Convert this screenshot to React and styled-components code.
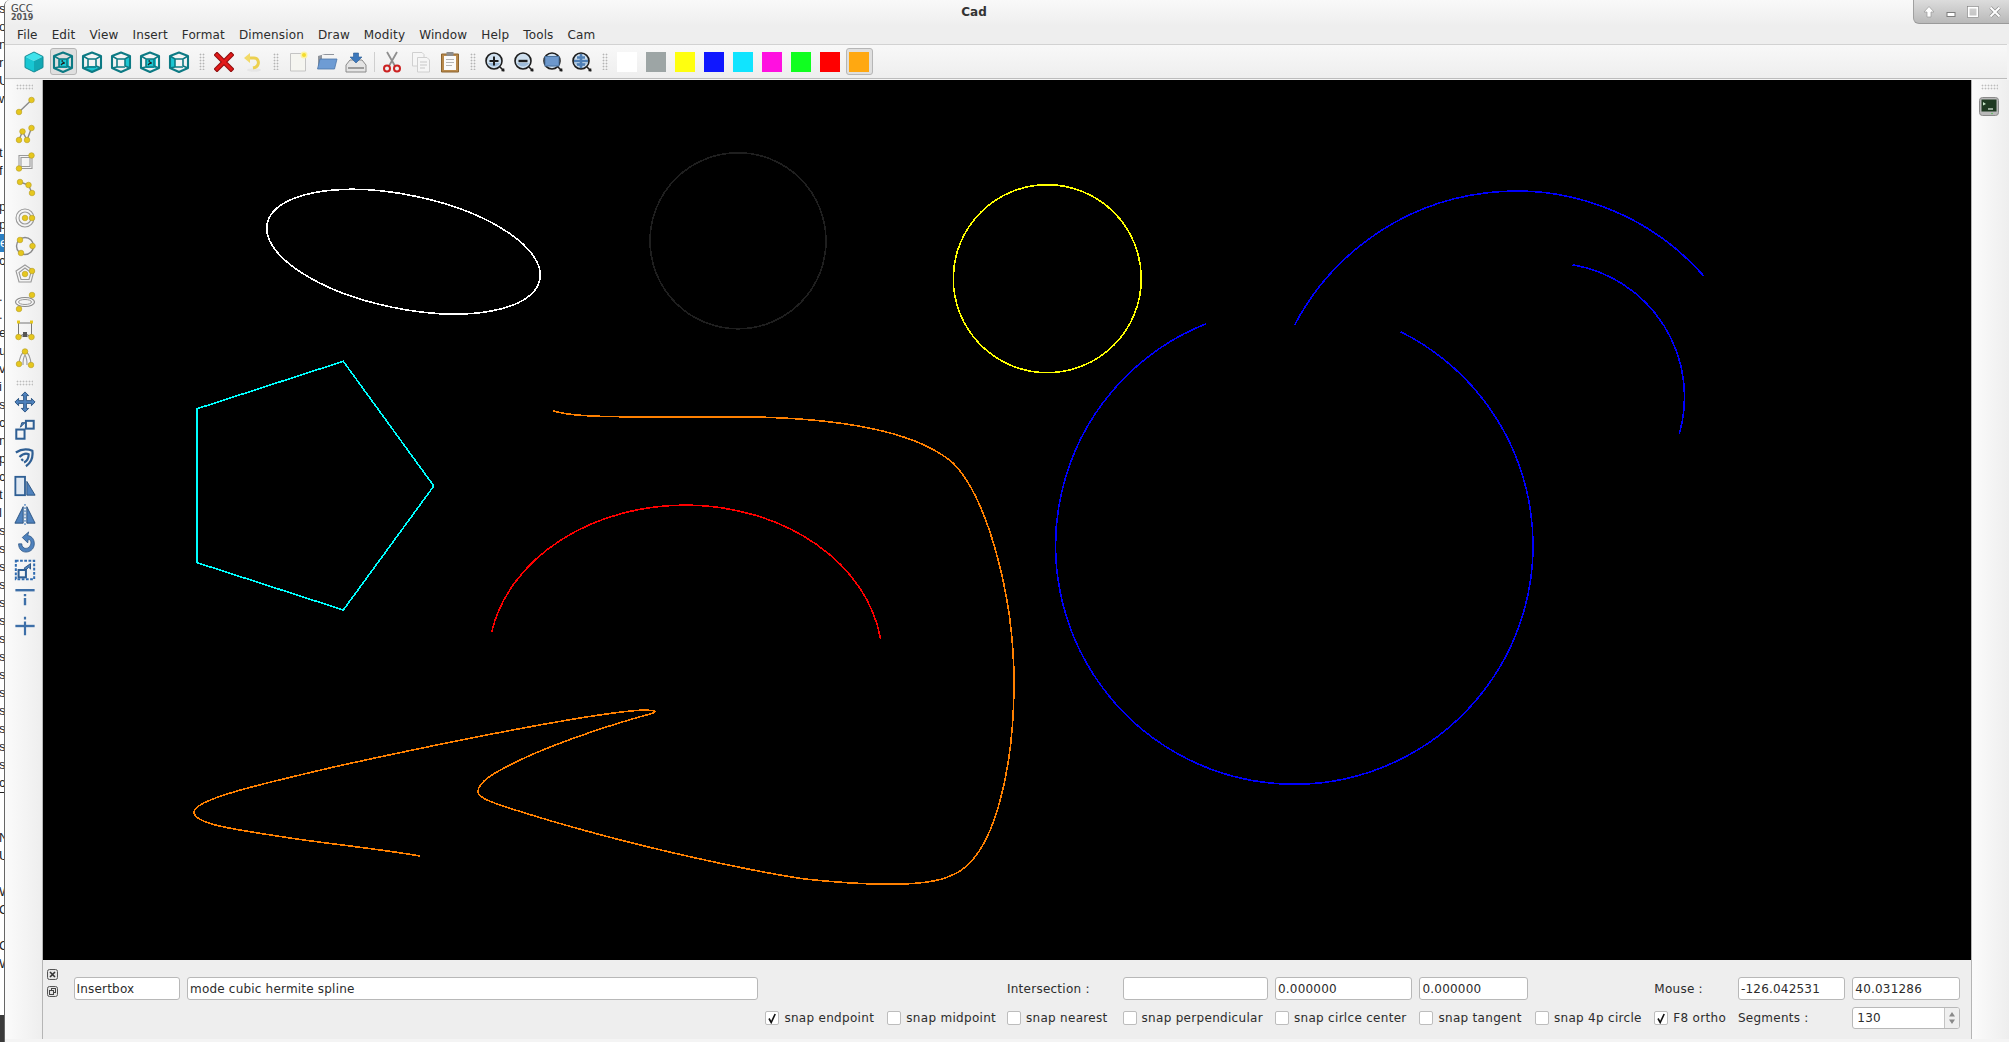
import React from "react";
import styled, { createGlobalStyle } from "styled-components";

const GlobalStyle = createGlobalStyle`
  html, body, #root {
    margin: 0;
    height: 100%;
    overflow: hidden;
  }
  body {
    background: #fff;
    font-family: "DejaVu Sans", sans-serif;
    font-size: 12px;
    color: #2c2c2c;
  }
`;

const Desktop = styled.div`
  display: flex;
  width: 2009px;
  height: 1042px;
  overflow: hidden;
`;

const BackStrip = styled.div`
  flex: 0 0 4px;
  display: flex;
  flex-direction: column;
  overflow: hidden;
  background: #fff;
`;

const BackRow = styled.div`
  flex: 0 0 18px;
  height: 18px;
  width: 12px;
  margin-left: ${(p) => (p.$hl ? 0 : -1)}px;
  line-height: 18px;
  font-family: "Liberation Sans", sans-serif;
  font-size: 13px;
  color: ${(p) => (p.$hl ? "#fff" : "#222")};
  background: ${(p) => (p.$hl ? "#2a7fc4" : "transparent")};
  border-bottom: ${(p) => (p.$ruled ? "1px solid #222" : "none")};
`;

const BackDark = styled.div`
  margin-top: auto;
  flex: 0 0 27px;
  background: #3a3a3a;
`;

const Window = styled.div`
  flex: 1;
  min-width: 0;
  display: flex;
  flex-direction: column;
  background: #f4f4f4;
  border-left: 1px solid #666;
  border-top-left-radius: 6px;
  overflow: hidden;
  padding-bottom: 3px;
`;

const TitleBar = styled.div`
  flex: 0 0 26px;
  display: flex;
  align-items: flex-start;
  background: linear-gradient(to bottom, #f9f9f9, #eeeeee);
`;

const Logo = styled.div`
  width: 24px;
  margin: 4px 0 0 6px;
  color: #444;
  font-size: 10px;
  line-height: 10px;
`;

const LogoYear = styled.div`
  font-size: 8px;
  line-height: 8px;
  font-weight: bold;
  color: #555;
`;

const Title = styled.div`
  flex: 1;
  text-align: center;
  font-weight: bold;
  font-size: 12px;
  line-height: 12px;
  padding-top: 6px;
  color: #333;
`;

const WinButtons = styled.div`
  display: flex;
  align-items: center;
  height: 23px;
  padding: 0 3px 0 4px;
  background: linear-gradient(to bottom, #dcdcdc, #b9b9b9);
  border-left: 1px solid #a0a0a0;
  border-bottom: 1px solid #9a9a9a;
  border-bottom-left-radius: 6px;
`;

const WinButton = styled.div`
  width: 22px;
  height: 22px;
  display: flex;
  align-items: center;
  justify-content: center;
`;

const MenuBar = styled.div`
  flex: 0 0 18px;
  display: flex;
  align-items: center;
  padding-left: 5px;
  background: #eeeeee;
`;

const MenuItem = styled.div`
  padding: 0 7px;
  line-height: 18px;
  font-size: 12px;
  letter-spacing: 0.14px;
  color: #2c2c2c;
`;

const Toolbar = styled.div`
  flex: 0 0 35px;
  display: flex;
  align-items: center;
  box-sizing: border-box;
  margin: 0 2px 1px 0;
  padding-left: 14.5px;
  background: linear-gradient(to bottom, #f8f8f8, #eeeeee);
  border-top: 1px solid #d2d2d2;
  border-bottom: 1px solid #bcbcbc;
`;

const ToolButton = styled.div`
  flex: 0 0 27px;
  height: 27px;
  margin: 0 1px;
  box-sizing: border-box;
  display: flex;
  align-items: center;
  justify-content: center;
  border: 1px solid ${(p) => (p.$active ? "#b6b6b6" : "transparent")};
  border-radius: 3px;
  background: ${(p) => (p.$active ? "#dfdfdf" : "transparent")};
`;

const Swatch = styled.div`
  width: 20px;
  height: 20px;
  background: ${(p) => p.$color};
`;

const GripBox = styled.div`
  flex: 0 0 16px;
  display: flex;
  justify-content: center;
`;

const DotsV = styled.div`
  width: 6px;
  height: 17px;
  background: radial-gradient(circle, #b4b4b4 0.8px, transparent 1.1px) 0 0 / 3px 3px;
`;

const ToolSep = styled.div`
  flex: 0 0 1px;
  height: 20px;
  margin: 0 3px;
  background: #cfcfcf;
`;

const Body = styled.div`
  flex: 1;
  min-height: 0;
  display: flex;
`;

const SideBar = styled.div`
  flex: 0 0 38px;
  box-sizing: border-box;
  display: flex;
  flex-direction: column;
  background: linear-gradient(to right, #fbfbfb, #eeeeee);
  border-${(p) => p.$side}: 1px solid #b5b5b5;
  padding-${(p) => (p.$side === "right" ? "left" : "right")}: ${(p) => (p.$side === "right" ? 2 : 3)}px;
`;

const DotsH = styled.div`
  flex: 0 0 6px;
  width: 17px;
  margin: ${(p) => p.$top}px auto 2px;
  background: radial-gradient(circle, #bcbcbc 0.8px, transparent 1.1px) 0 0 / 3px 3px;
`;

const SideButton = styled.div`
  flex: 0 0 28px;
  display: flex;
  align-items: center;
  justify-content: center;
`;

const Center = styled.div`
  flex: 1;
  min-width: 0;
  display: flex;
  flex-direction: column;
`;

const Canvas = styled.div`
  flex: 1;
  min-height: 0;
  background: #000;
  svg {
    display: block;
    width: 100%;
    height: 100%;
  }
`;

const Panel = styled.div`
  flex: 0 0 79px;
  display: flex;
  background: #eeeeee;
`;

const DockTools = styled.div`
  flex: 0 0 30.5px;
  box-sizing: border-box;
  display: flex;
  flex-direction: column;
  gap: 6px;
  padding: 9px 0 0 4px;
`;

const DockButton = styled.div`
  width: 11px;
  height: 11px;
`;

const FormGrid = styled.div`
  display: grid;
  grid-template-columns: 106.5px 571.4px 114.9px 112.7px 108.6px 145.4px 137.5px 108.5px 112.4px 76.6px 107.4px 107.2px;
  grid-template-rows: 23px 22px;
  column-gap: 7px;
  row-gap: 7px;
  margin-top: 17px;
  align-self: flex-start;
`;

const Field = styled.input`
  grid-column: ${(p) => p.$col};
  grid-row: 1;
  min-width: 0;
  box-sizing: border-box;
  height: 23px;
  margin: 0;
  padding: 0 2px;
  background: #fff;
  border: 1px solid #b8b8b8;
  border-radius: 3px;
  outline: none;
  font-family: inherit;
  font-size: 12px;
  letter-spacing: 0.2px;
  color: #2c2c2c;
`;

const Label = styled.div`
  grid-column: ${(p) => p.$col};
  grid-row: ${(p) => p.$row};
  align-self: center;
  font-size: 12px;
  letter-spacing: 0.25px;
  white-space: nowrap;
`;

const CheckItem = styled.div`
  grid-column: ${(p) => p.$col};
  grid-row: 2;
  display: flex;
  align-items: center;
  gap: 5px;
  font-size: 12px;
  letter-spacing: 0.3px;
  white-space: nowrap;
`;

const CheckBox = styled.div`
  flex: 0 0 14px;
  height: 14px;
  box-sizing: border-box;
  display: flex;
  align-items: center;
  justify-content: center;
  background: #fff;
  border: 1px solid #bdbdbd;
  border-radius: 2px;
`;

const SpinBox = styled.div`
  grid-column: 12;
  grid-row: 2;
  display: flex;
  box-sizing: border-box;
  background: #fff;
  border: 1px solid #b8b8b8;
  border-radius: 3px;
  overflow: hidden;
`;

const SpinValue = styled.div`
  flex: 1;
  padding-left: 4px;
  line-height: 20px;
  letter-spacing: 0.25px;
`;

const SpinArrows = styled.div`
  flex: 0 0 14px;
  display: flex;
  align-items: center;
  justify-content: center;
  background: #efefef;
  border-left: 1px solid #c4c4c4;
`;

// hermite curve as drawn on the canvas, page coordinates
const hermite =
  "M553 410.7 C565 415 590 416.5 619 416.7 C670 417 720 416.5 756 417 " +
  "C840 419 915 430 953 463 C985 495 1014 590 1014 683 C1014 760 997 860 950 876 " +
  "C925 888 860 885 805 879 C770 874 640 850 509 808 C490 802 478 797 478 792 " +
  "C478 780 500 770 520 760 C560 741 620 722 652 713.5 C658 711 654 710.5 644 710 " +
  "C600 712 470 737 333.6 767 C280 780 194 798 194 812 C194 825 240 830 290 838 " +
  "C330 844 380 849 420 856";

function Drawing() {
  return (
    <svg viewBox="43 80 1928 880" fill="none" strokeWidth="1.6" shapeRendering="crispEdges">
      <ellipse cx="403.5" cy="251.7" rx="139.2" ry="56.7" transform="rotate(11.7 403.5 251.7)" stroke="#fff" />
      <circle cx="738" cy="240.8" r="88" stroke="#1f1f1f" />
      <circle cx="1047.3" cy="278.7" r="94" stroke="#ffff00" />
      <polygon points="343.3,361.3 197.2,408.7 197.2,562.7 343.3,610 433.8,486" stroke="#00ffff" />
      <path d="M491.6 632.3 A197 155 0 0 1 880.5 638.7" stroke="#ff0000" />
      <path d={hermite} stroke="#ff8000" />
      <path d="M1205.7 323.9 A238.7 238.7 0 1 0 1400.8 331.9" stroke="#0000ff" />
      <path d="M1294.6 325 A250 250 0 0 1 1703.5 275.7" stroke="#0000ff" />
      <path d="M1572.5 264.8 A134 134 0 0 1 1679.2 434.4" stroke="#0000ff" />
    </svg>
  );
}

const cubeFaces = {
  front: "M7 8 L17 8 L17 17 L7 17 Z",
  top: "M11 1.5 L20 5 L15 8 L6 8 L2 5 Z",
  bottom: "M7 15 L15 15 L20 17 L11 21 L2 17 Z",
  left: "M2 5 L7 8 L7 16 L2 17 Z",
  right: "M15 8 L20 5 L20 17 L15 15 Z",
};

function CubeIcon({ face, solid }) {
  if (solid) {
    return (
      <svg width="22" height="22" viewBox="0 0 22 22">
        <path d="M11 1 L20 5.5 L11 10 L2 5.5 Z" fill="#40e3ec" />
        <path d="M2 5.5 L11 10 V21 L2 16.5 Z" fill="#18c6d2" />
        <path d="M20 5.5 L11 10 V21 L20 16.5 Z" fill="#12a8b4" />
        <path d="M11 1 L20 5.5 V16.5 L11 21 L2 16.5 V5.5 Z" fill="none" stroke="#128a94" strokeWidth="1" />
      </svg>
    );
  }
  return (
    <svg width="22" height="22" viewBox="0 0 22 22" fill="none">
      <path d={cubeFaces[face]} fill="#1cc6d2" />
      <path d="M11 1.5 L20 5 V17 L11 21 L2 17 V5 Z" stroke="#0d7a84" strokeWidth="2.1" strokeLinejoin="round" />
      <path d="M2 5 L7 8 H15 L20 5 M7 8 V16 M15 8 V15 M7 16 L2 17 M15 15 L20 17 M7 16 H15" stroke="#0d7a84" strokeWidth="1.6" />
      {face === "front" && <path d="M9 14 L12 11 M12 11 V13 M9.5 10 H11" stroke="#222" strokeWidth="1.3" />}
    </svg>
  );
}

function DeleteIcon() {
  return (
    <svg width="20" height="20" viewBox="0 0 20 20" fill="none" strokeLinecap="square">
      <path d="M3 3 L17 17 M17 3 L3 17" stroke="#8e0d0d" strokeWidth="5" />
      <path d="M3 3 L17 17 M17 3 L3 17" stroke="#e21a1a" strokeWidth="3" />
    </svg>
  );
}

function UndoIcon() {
  return (
    <svg width="20" height="22" viewBox="0 0 20 22" fill="none">
      <ellipse cx="11" cy="19" rx="7" ry="1.8" fill="#e6e6e6" />
      <path d="M6 7 H11 C15 7 16 11 15 13.5 C14.5 15 12.5 16.5 10 17" stroke="#ecd050" strokeWidth="3" />
      <path d="M1 7 L7 2 V12 Z" fill="#f2da68" />
    </svg>
  );
}

function NewIcon() {
  return (
    <svg width="22" height="22" viewBox="0 0 22 22">
      <path d="M3.5 2.5 H18.5 V20 H3.5 Z" fill="#f5f5f0" stroke="#c4c4c4" />
      <circle cx="17" cy="4" r="3.5" fill="#fdf3a0" />
      <circle cx="17" cy="4" r="2" fill="#f4dc2c" />
    </svg>
  );
}

function OpenIcon() {
  return (
    <svg width="22" height="20" viewBox="0 0 22 20">
      <path d="M2 4 L9 2 H18 V14 H2 Z" fill="#8f949c" />
      <path d="M6 3 H18 V10 H6 Z" fill="#f4f4f4" />
      <path d="M4 7 H21 L18.5 17 H1.5 Z" fill="#6e9cd4" stroke="#4c76a8" strokeWidth="0.8" />
    </svg>
  );
}

function SaveIcon() {
  return (
    <svg width="22" height="22" viewBox="0 0 22 22">
      <path d="M5 9 H17 L21 14 V21 H1 V14 Z" fill="#e4e4e4" stroke="#8a8a8a" />
      <path d="M3 16 H19 V18 H3 Z" fill="#9b9b9b" />
      <path d="M8.5 2 H13.5 V6 H17 L11 12 L5 6 H8.5 Z" fill="#3c78bc" stroke="#2a5a92" strokeWidth="0.6" />
    </svg>
  );
}

function CutIcon() {
  return (
    <svg width="20" height="22" viewBox="0 0 20 22" fill="none">
      <path d="M5 1 L13 15 M15 1 L7 15" stroke="#8f8f8f" strokeWidth="1.8" />
      <circle cx="5" cy="17.5" r="3" stroke="#cc2222" strokeWidth="2" />
      <circle cx="15" cy="17.5" r="3" stroke="#cc2222" strokeWidth="2" />
    </svg>
  );
}

function CopyIcon() {
  return (
    <svg width="22" height="22" viewBox="0 0 22 22" fill="#f6f6f6" stroke="#d0d0d0">
      <path d="M2.5 1.5 H12 L14 3.5 V15 H2.5 Z" />
      <path d="M7.5 6.5 H17 L19.5 9 V21 H7.5 Z" />
      <path d="M10 11 H17 M10 14 H17 M10 17 H15" stroke="#c8c8c8" />
    </svg>
  );
}

function PasteIcon() {
  return (
    <svg width="20" height="22" viewBox="0 0 20 22">
      <path d="M1.5 3 H18.5 V21 H1.5 Z" fill="#b98a4c" stroke="#8c6530" />
      <path d="M4 5 H16 V19 H4 Z" fill="#fbfbfb" />
      <path d="M6 8.5 H14 M6 11.5 H14 M6 14.5 H12" stroke="#b5b5b5" />
      <path d="M6.5 1 H13.5 V5 H6.5 Z" fill="#8d8d8d" />
    </svg>
  );
}

function ZoomIcon({ kind }) {
  return (
    <svg width="22" height="22" viewBox="0 0 22 22" fill="none">
      <circle cx="10" cy="10" r="8" fill="#cfe0ef" stroke="#1d1d1d" strokeWidth="1.6" />
      <path d="M4 12 A7 7 0 0 0 16 12 Z" fill="#9dbbd9" />
      {kind === "in" && <path d="M5.5 10 H14.5 M10 5.5 V14.5" stroke="#1d1d1d" strokeWidth="2" />}
      {kind === "out" && <path d="M5.5 10 H14.5" stroke="#1d1d1d" strokeWidth="2.4" />}
      {kind === "window" && <rect x="3" y="5.5" width="14" height="9.5" fill="#6d98cc" stroke="#4a729f" />}
      {kind === "all" && (
        <path d="M3 10 H17 M10 3 V17 M6 6.5 H14 M6 13.5 H14" stroke="#4f7fb5" strokeWidth="2.6" />
      )}
      <path d="M16 16 L19 19 M17.5 19.5 L20.5 19.5 M19.5 17.5 V20.5" stroke="#1d1d1d" strokeWidth="1.6" />
    </svg>
  );
}

const dotFill = { fill: "#e6c71e", stroke: "#b59c22", strokeWidth: 0.6 };

function Dots({ at }) {
  return at.map(([x, y]) => <circle key={`${x}-${y}`} cx={x} cy={y} r="2.8" {...dotFill} />);
}

const drawIcons = [
  <>
    <path d="M6 18 L18.5 6" stroke="#8a8a8a" strokeWidth="1.4" />
    <Dots at={[[6, 18], [18.5, 6]]} />
  </>,
  <>
    <path d="M6 18 L9.5 9.5 L14 18 L18.5 6" stroke="#8a8a8a" strokeWidth="1.4" />
    <Dots at={[[6, 18], [9.5, 9.5], [14, 18], [18.5, 6]]} />
  </>,
  <>
    <path d="M6 5.5 H19 V18.5 H6 Z M8 7.5 H17 V16.5 H8 Z" stroke="#9a9a9a" strokeWidth="1.1" />
    <Dots at={[[6, 18.5], [18.5, 5.5]]} />
  </>,
  <>
    <path d="M7 4 L15.5 7 L19 15" stroke="#8a8a8a" strokeWidth="1.4" />
    <Dots at={[[7, 4], [15.5, 7], [19, 15]]} />
  </>,
  <>
    <circle cx="12" cy="12" r="9" stroke="#9a9a9a" strokeWidth="1.1" />
    <circle cx="12" cy="12" r="6" stroke="#9a9a9a" strokeWidth="1.1" />
    <Dots at={[[12, 12], [19, 12]]} />
  </>,
  <>
    <circle cx="12" cy="12" r="8.5" stroke="#8a8a8a" strokeWidth="1.4" />
    <Dots at={[[7, 6], [19.5, 12], [8, 19]]} />
  </>,
  <>
    <path d="M12 3 L21 9 L18 20 H6 L3 9 Z M12 6 L18 10.5 L16 17.5 H8 L6 10.5 Z" stroke="#9a9a9a" strokeWidth="1.1" />
    <Dots at={[[12, 12], [19, 9]]} />
  </>,
  <>
    <ellipse cx="12" cy="12" rx="9.5" ry="4.5" stroke="#8a8a8a" strokeWidth="1.1" />
    <ellipse cx="12" cy="12" rx="6.5" ry="2.5" stroke="#9a9a9a" strokeWidth="1" />
    <Dots at={[[19, 5], [6, 19]]} />
  </>,
  <>
    <path d="M5.5 4 V19 M18.5 4 V19 M5.5 5 H18.5" stroke="#777" strokeWidth="1" />
    <path d="M7 19 A6 6 0 0 1 17 19 M9.5 19 A3 3 0 0 1 14.5 19" stroke="#777" strokeWidth="1.2" />
    <rect x="10" y="14" width="4" height="5" fill="#555" />
    <rect x="4" y="2.5" width="3" height="3" fill="#e6c71e" />
    <rect x="17" y="2.5" width="3" height="3" fill="#e6c71e" />
    <Dots at={[[5.5, 19], [18.5, 19]]} />
  </>,
  <>
    <path d="M6 19 C6 12 9 6 12 5.5 C15 6 18 12 18 19 M10 19 C10 15 10.5 11 12 9 C13.5 11 14 15 14 19" stroke="#9a9a9a" strokeWidth="1.1" />
    <Dots at={[[6, 18], [12, 5.5], [18, 19]]} />
  </>,
];

const blue = { fill: "#4f82bd", stroke: "#26507f", strokeWidth: 1 };
const blueLine = { fill: "none", stroke: "#2f5f94", strokeWidth: 2.2 };

const editIcons = [
  <path {...blue} d="M12 1 L16 5 H13.5 V10.5 H19 V8 L23 12 L19 16 V13.5 H13.5 V19 H16 L12 23 L8 19 H10.5 V13.5 H5 V16 L1 12 L5 8 V10.5 H10.5 V5 H8 Z" />,
  <>
    <rect x="2.5" y="11.5" width="9" height="10" {...blueLine} />
    <rect x="13" y="2" width="8.5" height="8.5" {...blueLine} />
    <path {...blue} d="M7 9 L12 4 H8.5 Z" />
  </>,
  <path {...blueLine} strokeWidth="2.4" d="M2 6 C8 2 15 2 20 4 C21 11 19 17 13 21 M6 11 C10 7 14 7 16 8 C16 12 15 15 11 17 M8 13 L10 15" />,
  <>
    <rect x="1.5" y="2" width="10.5" height="20" fill="#dfe8f2" stroke="#2f5f94" strokeWidth="2" />
    <path {...blue} d="M14 7 L23 22 H14 Z" />
  </>,
  <>
    <path {...blue} d="M10 4 V22 H1 Z" />
    <path {...blue} d="M14 4 V22 H23 Z" />
    <path d="M12 1 V24" stroke="#5a8cc4" strokeWidth="1.6" strokeDasharray="2 1.5" />
  </>,
  <>
    <path {...blue} strokeWidth="0.8" d="M5 14 C5 20 9 23 13 23 C19 23 23 18 22 12 C21.5 8 18 5 15 5 L16 1 L9 7 L15 13 L15.5 9 C17.5 9 18.5 11 18.5 13 C18.5 16 16 19 13 19 C10.5 19 8.5 17 8.5 14 Z" />
  </>,
  <>
    <rect x="2" y="2" width="20" height="20" fill="none" stroke="#2f6bb0" strokeWidth="2.2" strokeDasharray="3 1.6" />
    <rect x="5" y="12" width="8" height="8" {...blueLine} />
    <path {...blue} d="M11 10 L18 5 V11 L16 9 L13 12 Z" />
  </>,
  <>
    <path d="M1.5 3.5 H22.5" stroke="#3d6fa8" strokeWidth="2.6" />
    <path d="M12 7.5 V10 M12 12 V20" stroke="#3d6fa8" strokeWidth="2.6" />
  </>,
  <>
    <path d="M1.5 12 H22.5" stroke="#3d6fa8" strokeWidth="2.6" />
    <path d="M12 2 V5 M12 7 V22" stroke="#3d6fa8" strokeWidth="2.4" />
  </>,
];

function TerminalIcon() {
  return (
    <svg width="20" height="19" viewBox="0 0 20 19">
      <rect x="0.5" y="0.5" width="19" height="18" rx="3" fill="#b9b9b9" stroke="#8a8a8a" />
      <rect x="2.5" y="2.5" width="15" height="12" fill="#1f3a22" />
      <path d="M4 5 L7 7 L4 8.5 Z" fill="#c8e8c8" />
      <path d="M9 12 H14" stroke="#eaf5ea" strokeWidth="1.2" />
      <circle cx="13" cy="16.5" r="0.8" fill="#52c052" />
    </svg>
  );
}

function ArrowUp() {
  return (
    <svg width="12" height="12" viewBox="0 0 12 12">
      <path d="M6 0.5 L11 6 H8 V11 H4 V6 H1 Z" fill="#fff" stroke="#9a9a9a" strokeWidth="0.7" />
    </svg>
  );
}

function Minimize() {
  return (
    <svg width="10" height="12" viewBox="0 0 10 12">
      <rect x="1" y="6.5" width="8" height="4" fill="#fff" stroke="#7d7d7d" />
    </svg>
  );
}

function Maximize() {
  return (
    <svg width="12" height="12" viewBox="0 0 12 12">
      <rect x="1.5" y="1.5" width="9" height="9" fill="none" stroke="#fff" strokeWidth="2" />
      <rect x="0.5" y="0.5" width="11" height="11" fill="none" stroke="#7d7d7d" strokeWidth="0.6" />
    </svg>
  );
}

function CloseX() {
  return (
    <svg width="12" height="12" viewBox="0 0 12 12">
      <path d="M1.5 1.5 L10.5 10.5 M10.5 1.5 L1.5 10.5" stroke="#8d8d8d" strokeWidth="3.2" />
      <path d="M1.5 1.5 L10.5 10.5 M10.5 1.5 L1.5 10.5" stroke="#fff" strokeWidth="2" />
    </svg>
  );
}

function DockClose() {
  return (
    <svg width="11" height="11" viewBox="0 0 11 11" fill="none">
      <rect x="0.5" y="0.5" width="10" height="10" rx="2" fill="#e4e4e4" stroke="#555" />
      <path d="M3 3 L8 8 M8 3 L3 8" stroke="#333" strokeWidth="1.6" />
    </svg>
  );
}

function DockFloat() {
  return (
    <svg width="11" height="11" viewBox="0 0 11 11" fill="none">
      <rect x="0.5" y="0.5" width="10" height="10" rx="2" fill="#e4e4e4" stroke="#555" />
      <rect x="4.5" y="2.5" width="4" height="4" stroke="#444" />
      <rect x="2.5" y="4.5" width="4" height="4" fill="#e4e4e4" stroke="#444" />
    </svg>
  );
}

function CheckMark() {
  return (
    <svg width="10" height="11" viewBox="0 0 10 11" fill="none">
      <path d="M2 5.5 L4.2 9.5 L8.2 1" stroke="#111" strokeWidth="1.6" />
    </svg>
  );
}

function Grip() {
  return (
    <GripBox>
      <DotsV />
    </GripBox>
  );
}

const backRows = [
  "s", "o", "n", "r", "U", "w", "", "", "t", "f", "", "p", "p", "e", "c", "", ".", ".", "e", "u",
  "v", "i", "s", "c", "n", "p", "c", "t", "l", "s", "s", "s", "s", "s", "s", "s", "s", "s", "s", "s",
  "s", "s", "s", "c", "", "", "N", "U", "", "W", "O", "", "C", "W",
];

const menus = ["File", "Edit", "View", "Insert", "Format", "Dimension", "Draw", "Modity", "Window", "Help", "Tools", "Cam"];
const swatches = ["#ffffff", "#9da5a5", "#ffff0f", "#0f17ff", "#10e4ff", "#ff10e0", "#10ff20", "#ff0000", "#ffa811"];
const cubes = [{ solid: true }, { face: "front" }, { face: "bottom" }, { face: "right" }, { face: "front" }, { face: "left" }];
const snaps = [
  ["snap endpoint", 3, true],
  ["snap midpoint", 4, false],
  ["snap nearest", 5, false],
  ["snap perpendicular", 6, false],
  ["snap cirlce center", 7, false],
  ["snap tangent", 8, false],
  ["snap 4p circle", 9, false],
  ["F8 ortho", 10, true],
];

export default function App() {
  return (
    <Desktop>
      <GlobalStyle />
      <BackStrip>
        {backRows.map((ch, i) => (
          <BackRow key={i} $hl={i === 13} $ruled={i === 43}>{ch}</BackRow>
        ))}
        <BackDark />
      </BackStrip>

      <Window>
        <TitleBar>
          <Logo>
            GCC
            <LogoYear>2019</LogoYear>
          </Logo>
          <Title>Cad</Title>
          <WinButtons>
            <WinButton><ArrowUp /></WinButton>
            <WinButton><Minimize /></WinButton>
            <WinButton><Maximize /></WinButton>
            <WinButton><CloseX /></WinButton>
          </WinButtons>
        </TitleBar>

        <MenuBar>
          {menus.map((m) => (
            <MenuItem key={m}>{m}</MenuItem>
          ))}
        </MenuBar>

        <Toolbar>
          {cubes.map((c, i) => (
            <ToolButton key={i} $active={i === 1}>
              <CubeIcon {...c} />
            </ToolButton>
          ))}
          <Grip />
          <ToolButton><DeleteIcon /></ToolButton>
          <ToolButton><UndoIcon /></ToolButton>
          <Grip />
          <ToolButton><NewIcon /></ToolButton>
          <ToolButton><OpenIcon /></ToolButton>
          <ToolButton><SaveIcon /></ToolButton>
          <ToolSep />
          <ToolButton><CutIcon /></ToolButton>
          <ToolButton><CopyIcon /></ToolButton>
          <ToolButton><PasteIcon /></ToolButton>
          <Grip />
          <ToolButton><ZoomIcon kind="in" /></ToolButton>
          <ToolButton><ZoomIcon kind="out" /></ToolButton>
          <ToolButton><ZoomIcon kind="window" /></ToolButton>
          <ToolButton><ZoomIcon kind="all" /></ToolButton>
          <Grip />
          {swatches.map((c, i) => (
            <ToolButton key={c} $active={i === swatches.length - 1}>
              <Swatch $color={c} />
            </ToolButton>
          ))}
        </Toolbar>

        <Body>
          <SideBar $side="right">
            <DotsH $top={4} />
            {drawIcons.map((icon, i) => (
              <SideButton key={i}>
                <svg width="24" height="24" viewBox="0 0 24 24" fill="none">{icon}</svg>
              </SideButton>
            ))}
            <DotsH $top={8} />
            {editIcons.map((icon, i) => (
              <SideButton key={i}>
                <svg width="22" height="22" viewBox="0 0 24 24" fill="none">{icon}</svg>
              </SideButton>
            ))}
          </SideBar>

          <Center>
            <Canvas>
              <Drawing />
            </Canvas>
            <Panel>
              <DockTools>
                <DockButton><DockClose /></DockButton>
                <DockButton><DockFloat /></DockButton>
              </DockTools>
              <FormGrid>
                <Field $col={1} readOnly value="Insertbox" />
                <Field $col={2} readOnly value="mode cubic hermite spline" />
                <Label $col={5} $row={1}>Intersection :</Label>
                <Field $col={6} readOnly value="" />
                <Field $col={7} readOnly value="0.000000" />
                <Field $col={8} readOnly value="0.000000" />
                <Label $col={10} $row={1}>Mouse :</Label>
                <Field $col={11} readOnly value="-126.042531" />
                <Field $col={12} readOnly value="40.031286" />
                {snaps.map(([text, col, on]) => (
                  <CheckItem key={text} $col={col}>
                    <CheckBox>{on && <CheckMark />}</CheckBox>
                    {text}
                  </CheckItem>
                ))}
                <Label $col={11} $row={2}>Segments :</Label>
                <SpinBox>
                  <SpinValue>130</SpinValue>
                  <SpinArrows>
                    <svg width="8" height="14" viewBox="0 0 8 14">
                      <path d="M4 1 L7 5.5 H1 Z M4 13 L7 8.5 H1 Z" fill="#8a8a8a" />
                    </svg>
                  </SpinArrows>
                </SpinBox>
              </FormGrid>
            </Panel>
          </Center>

          <SideBar $side="left">
            <DotsH $top={4} />
            <SideButton><TerminalIcon /></SideButton>
          </SideBar>
        </Body>
      </Window>
    </Desktop>
  );
}
